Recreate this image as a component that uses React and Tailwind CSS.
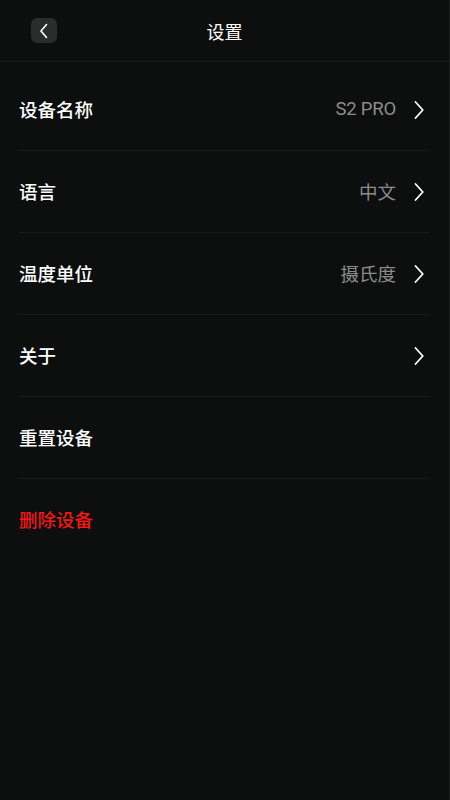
import React from "react";

const Chevron = () => (
  <svg width="12" height="20" viewBox="0 0 12 20" fill="none" className="ml-[17px]">
    <path d="M2.5 2 L9.8 10 L2.5 18" stroke="#ffffff" strokeWidth="1.8" strokeLinecap="round" strokeLinejoin="round" />
  </svg>
);

const rows = [
  { label: "设备名称", value: "S2 PRO", arrow: true },
  { label: "语言", value: "中文", arrow: true },
  { label: "温度单位", value: "摄氏度", arrow: true },
  { label: "关于", value: "", arrow: true },
  { label: "重置设备", value: "", arrow: false },
  { label: "删除设备", value: "", arrow: false, red: true },
];

export default function App() {
  return (
    <div
      className="w-[450px] h-[800px] bg-[#0d0f0f] text-white overflow-hidden border-r border-[#1c1e1e]"
      style={{ fontFamily: '"Noto Sans CJK SC", "Noto Sans", sans-serif' }}
    >
      <div className="h-[62px] flex items-center relative border-b border-[#1a1d24]">
        <div className="ml-[31px] w-[26px] h-[25px] rounded-[6px] bg-[#2b2d2d] flex items-center justify-center">
          <svg width="12" height="16" viewBox="0 0 12 16" fill="none">
            <path d="M8.5 1.5 L3 8 L8.5 14.5" stroke="#ffffff" strokeWidth="1.6" strokeLinecap="round" strokeLinejoin="round" />
          </svg>
        </div>
        <div className="absolute left-0 right-0 top-0 h-[62px] flex items-center justify-center text-[18px] pointer-events-none">
          设置
        </div>
      </div>
      <div className="pt-[7px] px-[19px]">
        {rows.map((r, i) => (
          <div
            key={i}
            className={`h-[82px] flex items-center ${i < rows.length - 1 ? "border-b border-[#171a1f]" : ""}`}
          >
            <span className={`text-[18.5px] font-medium ${r.red ? "text-[#f01818]" : "text-white"}`}>{r.label}</span>
            <div className="flex-1" />
            {r.value && (
              <span
                className={`text-[18.5px] text-[#8b8b8b] ${r.value === "S2 PRO" ? "tracking-[-0.2px]" : ""}`}
                style={{ fontFamily: r.value === "S2 PRO" ? 'Roboto, "Noto Sans", sans-serif' : undefined }}
              >
                {r.value}
              </span>
            )}
            {r.arrow && <div className="mr-[5px] flex items-center"><Chevron /></div>}
          </div>
        ))}
      </div>
    </div>
  );
}
